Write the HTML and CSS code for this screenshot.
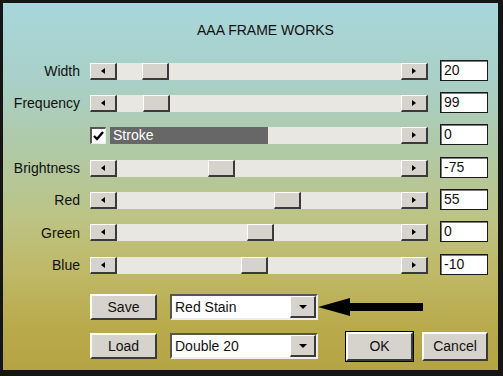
FILE: index.html
```html
<!DOCTYPE html>
<html lang="en">
  <head>
    <meta charset="UTF-8" />
    <title>AAA Frame Works</title>
    <link rel="stylesheet" href="styles.css">
  </head>
  <body>
    <div class="dialog">
      <div class="title">AAA FRAME WORKS</div>

      <div class="rows">
        <div class="row">
          <span class="label">Width</span>
          <div class="slider">
            <span class="btn-arrow"><i class="tri-left"></i></span>
            <div class="track"><span class="thumb" style="left: 25px"></span></div>
            <span class="btn-arrow"><i class="tri-right"></i></span>
          </div>
          <div class="value">20</div>
        </div>

        <div class="row">
          <span class="label">Frequency</span>
          <div class="slider">
            <span class="btn-arrow"><i class="tri-left"></i></span>
            <div class="track"><span class="thumb" style="left: 26px"></span></div>
            <span class="btn-arrow"><i class="tri-right"></i></span>
          </div>
          <div class="value">99</div>
        </div>

        <div class="row">
          <span class="label"></span>
          <div class="slider">
            <span class="checkbox">
              <svg width="11" height="10" viewBox="0 0 11 10"><path d="M1 5 L4 8 L10 1" fill="none" stroke="#000" stroke-width="2.4"/></svg>
            </span>
            <div class="track stroke-track"><span class="stroke-fill">Stroke</span></div>
            <span class="btn-arrow"><i class="tri-right"></i></span>
          </div>
          <div class="value">0</div>
        </div>

        <div class="row">
          <span class="label">Brightness</span>
          <div class="slider">
            <span class="btn-arrow"><i class="tri-left"></i></span>
            <div class="track"><span class="thumb" style="left: 91px"></span></div>
            <span class="btn-arrow"><i class="tri-right"></i></span>
          </div>
          <div class="value">-75</div>
        </div>

        <div class="row">
          <span class="label">Red</span>
          <div class="slider">
            <span class="btn-arrow"><i class="tri-left"></i></span>
            <div class="track"><span class="thumb" style="left: 157px"></span></div>
            <span class="btn-arrow"><i class="tri-right"></i></span>
          </div>
          <div class="value">55</div>
        </div>

        <div class="row">
          <span class="label">Green</span>
          <div class="slider">
            <span class="btn-arrow"><i class="tri-left"></i></span>
            <div class="track"><span class="thumb" style="left: 130px"></span></div>
            <span class="btn-arrow"><i class="tri-right"></i></span>
          </div>
          <div class="value">0</div>
        </div>

        <div class="row">
          <span class="label">Blue</span>
          <div class="slider">
            <span class="btn-arrow"><i class="tri-left"></i></span>
            <div class="track"><span class="thumb" style="left: 124px"></span></div>
            <span class="btn-arrow"><i class="tri-right"></i></span>
          </div>
          <div class="value">-10</div>
        </div>
      </div>

      <div class="presets">
        <div class="preset-row">
          <button class="btn btn-preset">Save</button>
          <div class="combo">
            <span class="combo-text">Red Stain</span>
            <span class="combo-btn"><i class="tri-down"></i></span>
          </div>
          <svg class="pointer" width="105" height="18" viewBox="0 0 105 18">
            <polygon points="0,9 32,0 32,5 105,5 105,13 32,13 32,18" fill="#000"/>
          </svg>
        </div>
        <div class="preset-row">
          <button class="btn btn-preset">Load</button>
          <div class="combo">
            <span class="combo-text">Double 20</span>
            <span class="combo-btn"><i class="tri-down"></i></span>
          </div>
          <button class="btn btn-ok">OK</button>
          <button class="btn btn-cancel">Cancel</button>
        </div>
      </div>
    </div>
  </body>
</html>
```

FILE: styles.css
```css
body {
  margin: 0;
  padding: 0;
  font-family: "Liberation Sans", Arial, sans-serif;
  font-size: 14px;
  color: #111;
  background-color: #111;
}

.dialog {
  width: 503px;
  height: 376px;
  box-sizing: border-box;
  border-style: solid;
  border-color: #151515;
  border-width: 3px 5px 6px 3px;
  padding-top: 19px;
  background: linear-gradient(to bottom, #a8d6db 0%, #a9d0c6 22%, #b0c9a6 40%, #bcc486 58%, #bfb866 74%, #b9aa4c 88%, #b4a444 100%);
}

.title {
  line-height: 16px;
  text-align: center;
  padding-left: 30px;
}

/* slider rows */

.rows {
  margin-top: 17px;
}

.row {
  display: flex;
  align-items: center;
  height: 32.33px;
}

.label {
  width: 77px;
  text-align: right;
  margin-right: 10px;
  line-height: 16px;
}

.slider {
  display: flex;
  align-items: center;
  width: 338px;
  height: 17px;
}

.btn-arrow {
  display: flex;
  align-items: center;
  justify-content: center;
  width: 27px;
  height: 17px;
  box-sizing: border-box;
  background-color: #d6d3cc;
  border-top: 1px solid #fff;
  border-left: 1px solid #fff;
  border-right: 2px solid #3a3a3a;
  border-bottom: 2px solid #3a3a3a;
}

.tri-left {
  width: 0;
  height: 0;
  border-top: 3px solid transparent;
  border-bottom: 3px solid transparent;
  border-right: 4px solid #000;
}

.tri-right {
  width: 0;
  height: 0;
  border-top: 3px solid transparent;
  border-bottom: 3px solid transparent;
  border-left: 4px solid #000;
}

.tri-down {
  width: 0;
  height: 0;
  border-left: 4px solid transparent;
  border-right: 4px solid transparent;
  border-top: 4px solid #000;
}

.track {
  position: relative;
  flex: 1;
  height: 17px;
  background-color: #e9e7e1;
}

.thumb {
  position: absolute;
  top: 0;
  width: 27px;
  height: 17px;
  box-sizing: border-box;
  background-color: #d6d3cc;
  border-top: 1px solid #fff;
  border-left: 1px solid #fff;
  border-right: 2px solid #3a3a3a;
  border-bottom: 2px solid #3a3a3a;
}

.checkbox {
  display: flex;
  align-items: center;
  justify-content: center;
  width: 16px;
  height: 17px;
  box-sizing: border-box;
  margin-right: 4px;
  background-color: #fff;
  border-top: 2px solid #555;
  border-left: 2px solid #555;
  border-right: 1px solid #eee;
  border-bottom: 1px solid #eee;
}

.stroke-fill {
  display: block;
  width: 158px;
  height: 17px;
  line-height: 17px;
  padding-left: 3px;
  box-sizing: border-box;
  background-color: #676767;
  color: #fff;
}

.value {
  width: 48px;
  height: 21px;
  box-sizing: border-box;
  margin-left: 12px;
  margin-top: -2px;
  padding-left: 3px;
  line-height: 19px;
  background-color: #fff;
  border: 1px solid #1a1a1a;
  box-shadow: inset 1px 1px #7a7a7a;
}

/* presets and buttons */

.presets {
  margin-top: 13px;
  padding-left: 87px;
}

.preset-row {
  display: flex;
  align-items: center;
  height: 26px;
  margin-bottom: 13px;
}

.btn {
  font-family: "Liberation Sans", Arial, sans-serif;
  font-size: 14px;
  color: #111;
  padding: 0;
  background-color: #d6d3cc;
  border-top: 2px solid #fff;
  border-left: 2px solid #fff;
  border-right: 2px solid #3a3a3a;
  border-bottom: 2px solid #3a3a3a;
}

.btn-preset {
  width: 67px;
  height: 26px;
  margin-right: 13px;
}

.combo {
  display: flex;
  align-items: center;
  width: 148px;
  height: 26px;
  box-sizing: border-box;
  background-color: #fff;
  border-top: 2px solid #555;
  border-left: 2px solid #555;
  border-right: 2px solid #eee;
  border-bottom: 2px solid #eee;
}

.combo-text {
  flex: 1;
  padding-left: 3px;
}

.combo-btn {
  display: flex;
  align-items: center;
  justify-content: center;
  width: 26px;
  height: 22px;
  box-sizing: border-box;
  background-color: #d6d3cc;
  border-top: 1px solid #fff;
  border-left: 1px solid #fff;
  border-right: 2px solid #3a3a3a;
  border-bottom: 2px solid #3a3a3a;
}

.btn-ok {
  width: 67px;
  height: 29px;
  margin-left: 28px;
  margin-right: 9px;
  outline: 1px solid #000;
  outline-offset: 0;
}

.btn-cancel {
  width: 66px;
  height: 29px;
}
```
